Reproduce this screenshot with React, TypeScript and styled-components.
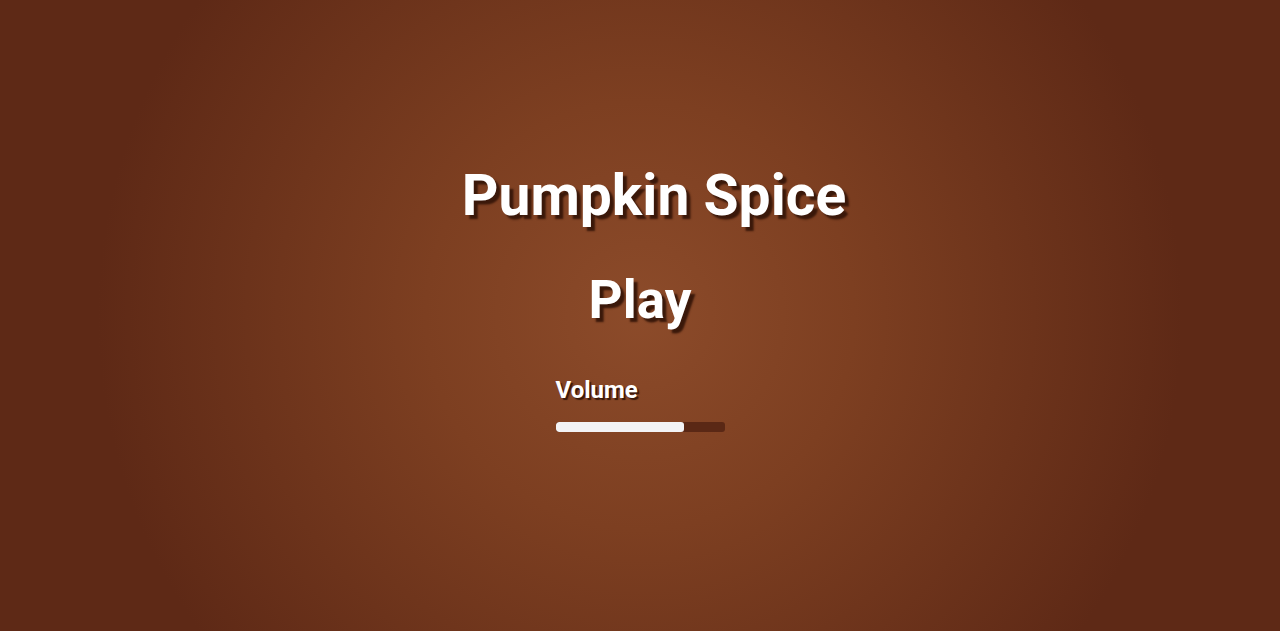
import React, { useState } from 'react';
import styled, { createGlobalStyle } from 'styled-components';

const GlobalStyle = createGlobalStyle`
    html, body, #root {
        margin: 0;
        height: 100%;
    }
    body {
        font-family: Roboto, 'Liberation Sans', sans-serif;
        overflow: hidden;
    }
`;

const Screen = styled.main`
    height: 100%;
    display: flex;
    flex-direction: column;
    align-items: center;
    padding-top: 160px;
    box-sizing: border-box;
    background: radial-gradient(
        circle at center,
        #8c4b2a 0%,
        #7d3f21 30%,
        #5e2916 76%
    );
    color: #ffffff;
`;

const Title = styled.h1`
    margin: 0 0 0 28px;
    font-size: 57px;
    font-weight: 700;
    line-height: 72px;
    text-shadow: 4px 4px 2px #3a180a;
`;

const PlayButton = styled.button`
    margin-top: 38px;
    background: none;
    border: none;
    padding: 0;
    color: inherit;
    font-family: inherit;
    font-size: 53px;
    font-weight: 700;
    line-height: 60px;
    cursor: pointer;
    text-shadow: 4px 4px 2px #3a180a;
`;

const VolumeBlock = styled.div`
    margin-top: 46px;
    width: 169px;
    display: flex;
    flex-direction: column;
    gap: 18px;
`;

const Label = styled.label`
    font-size: 24px;
    font-weight: 700;
    line-height: 28px;
    text-shadow: 2px 2px 1px #3a180a;
`;

const Track = styled.div`
    height: 10px;
    border-radius: 3px;
    background: #5a2815;
    overflow: hidden;
`;

const Fill = styled.div`
    height: 100%;
    border-radius: 3px;
    background: #f3f3f5;
`;

export default function App() {
    const [volume] = useState(0.76);
    return (
        <>
            <GlobalStyle />
            <Screen>
                <Title>Pumpkin Spice</Title>
                <PlayButton>Play</PlayButton>
                <VolumeBlock>
                    <Label>Volume</Label>
                    <Track>
                        <Fill style={{ width: `${volume * 100}%` }} />
                    </Track>
                </VolumeBlock>
            </Screen>
        </>
    );
}
